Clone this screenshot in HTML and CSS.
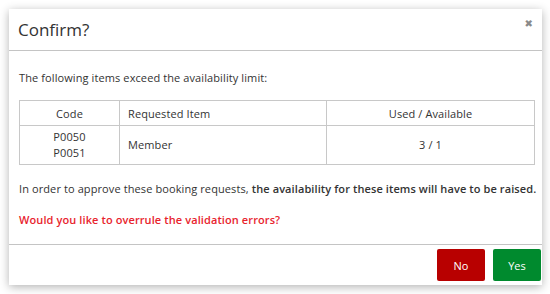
FILE: index.html
```html
<!DOCTYPE html>
<html lang="en">
<head>
    <meta charset="UTF-8">
    <title>Confirm?</title>
    <link rel="stylesheet" href="styles.css">
</head>
<body>
    <!-- confirm dialog -->
    <div class="modal">
        <div class="modal-header">
            <h3 class="modal-title">Confirm?</h3>
            <span class="close">&#10006;</span>
        </div>

        <div class="modal-body">
            <p class="intro">The following items exceed the availability limit:</p>

            <table class="items">
                <thead>
                    <tr>
                        <th class="col-code">Code</th>
                        <th class="col-item">Requested Item</th>
                        <th class="col-used">Used / Available</th>
                    </tr>
                </thead>
                <tbody>
                    <tr>
                        <td class="col-code">P0050<br>P0051</td>
                        <td class="col-item">Member</td>
                        <td class="col-used">3 / 1</td>
                    </tr>
                </tbody>
            </table>

            <p class="note">In order to approve these booking requests, <b>the availability for these items will have to be raised.</b></p>
            <p class="warn">Would you like to overrule the validation errors?</p>
        </div>

        <div class="modal-footer">
            <button class="btn btn-no">No</button>
            <button class="btn btn-yes">Yes</button>
        </div>
    </div>
</body>
</html>
```

FILE: styles.css
```css
/* page */
body {
    margin: 0;
    background: #fff;
    font-family: 'Open Sans', sans-serif;
    color: #333;
}

/* dialog box */
.modal {
    margin: 9px;
    width: 533px;
    height: 276px;
    background: #fff;
    box-shadow: 0 2px 9px rgba(0, 0, 0, 0.3);
    display: flex;
    flex-direction: column;
}

.modal-header {
    height: 41px;
    border-bottom: 1px solid #c4c4c4;
    display: flex;
    align-items: center;
    justify-content: space-between;
    padding: 0 9px 0 9px;
}

.modal-title {
    margin: 0;
    font-size: 17px;
    font-weight: normal;
    color: #333;
}

.close {
    font-size: 10px;
    color: #8a8a8a;
    font-family: 'DejaVu Sans', sans-serif;
    margin-top: -12px;
}

.modal-body {
    flex: 1;
    padding: 0 6px 0 10px;
    font-size: 11px;
    letter-spacing: 0.1px;
}

.intro {
    margin: 19px 0 15px;
}

/* items table */
.items {
    width: 516px;
    border-collapse: collapse;
    font-size: 11px;
}

.items th,
.items td {
    border: 1px solid #c8c8c8;
    font-weight: normal;
    padding: 0 8px;
}

.items th {
    height: 24px;
}

.items td {
    height: 38px;
    line-height: 16px;
}

.col-code {
    width: 83px;
    text-align: center;
}

.col-item {
    width: 190px;
    text-align: left;
}

.col-used {
    text-align: center;
}

.note {
    margin: 16px 0 0;
    white-space: nowrap;
}

.note b {
    font-weight: 600;
}

.warn {
    margin: 16px 0 0;
    color: #e8232d;
    font-weight: 600;
}

/* footer buttons */
.modal-footer {
    border-top: 1px solid #c4c4c4;
    display: flex;
    justify-content: flex-end;
    gap: 8px;
    padding: 4px 1px 4px 0;
}

.btn {
    width: 48px;
    height: 32px;
    border: none;
    border-radius: 2px;
    color: #fff;
    font-family: 'Open Sans', sans-serif;
    font-size: 11px;
}

.btn-no {
    background: #b80000;
}

.btn-yes {
    background: #008a2e;
}
```
